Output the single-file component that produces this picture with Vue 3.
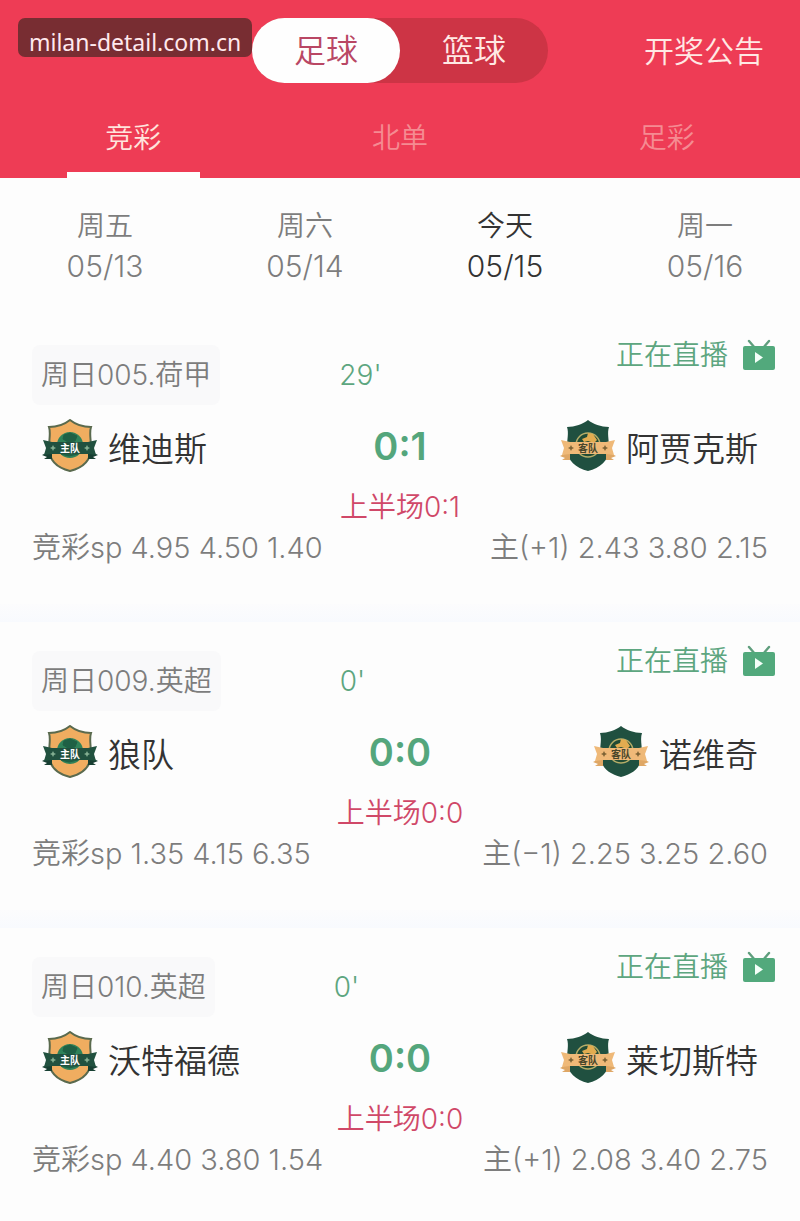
<template>
    <div class="page">
        <span class="site-label">milan-detail.com.cn</span>

        <header class="header">
            <div class="top-bar">
                <div class="switch">
                    <button v-for="sport in sports" :key="sport" type="button" class="switch-item"
                        :class="{ active: sport === activeSport }" @click="activeSport = sport">{{ sport }}</button>
                </div>
                <a href="#" class="notice">开奖公告</a>
            </div>
            <nav class="tabs">
                <button v-for="tab in tabs" :key="tab" type="button" class="tab"
                    :class="{ active: tab === activeTab }" @click="activeTab = tab">{{ tab }}</button>
            </nav>
        </header>

        <div class="days">
            <button v-for="day in days" :key="day.date" type="button" class="day"
                :class="{ active: day.date === activeDate }" @click="activeDate = day.date">
                <span>{{ day.name }}</span>
                <span class="date">{{ day.date }}</span>
            </button>
        </div>

        <main>
            <section v-for="match in matches" :key="match.league" class="match">
                <div class="match-top">
                    <span class="league">{{ match.league }}</span>
                    <span class="minute">{{ match.minute }}'</span>
                    <a href="#" class="live">
                        正在直播
                        <svg class="tv" viewBox="0 0 32 32" width="32" height="32" aria-hidden="true">
                            <path d="M6 2l6 7M26 2l-6 7" fill="none" stroke="#5f9e7d" stroke-width="2.4" stroke-linecap="round" />
                            <rect x="0" y="7" width="32" height="24" rx="2" fill="#52a97c" />
                            <path d="M12 13v11l8-5.500z" fill="#f4fff9" />
                        </svg>
                    </a>
                </div>

                <div class="teams">
                    <div class="team">
                        <svg class="badge" viewBox="0 0 56 54" width="56" height="54">
                            <path d="M28 1C23 5 15 8 7 8C9 14 7 20 7 29C7 42 16 49 28 52C40 49 49 42 49 29C49 20 47 14 49 8C41 8 33 5 28 1Z" fill="#f0ad60" stroke="#5a6a4e" stroke-width="2" />
                            <circle cx="28" cy="26" r="13" fill="#2f8259" />
                            <path d="M22 16l6-2 7 3-2 5-7 1-5-3zM19 35l8 2 9-2" fill="#1f6045" stroke="#1f6045" stroke-width="1" />
                            <path d="M0 36l10-5v9H2l3-2zM56 36l-10-5v9h8l-3-2z" fill="#173f32" />
                            <path d="M1 21l9 2h36l9-2-3 8 2 7-8-1H10l-8 1 2-7z" fill="#21513f" />
                            <path d="M11 26l1 2 2 1-2 1-1 2-1-2-2-1 2-1zM45 26l1 2 2 1-2 1-1 2-1-2-2-1 2-1z" fill="#83ae91" />
                            <text x="28" y="33" class="badge-text" fill="#fff">主队</text>
                        </svg>
                        <span class="name">{{ match.home }}</span>
                    </div>
                    <strong class="score">{{ match.score }}</strong>
                    <div class="team away">
                        <svg class="badge" viewBox="0 0 56 54" width="56" height="54">
                            <path d="M28 1C23 5 15 8 7 8C9 14 7 20 7 29C7 42 16 49 28 52C40 49 49 42 49 29C49 20 47 14 49 8C41 8 33 5 28 1Z" fill="#205040" />
                            <circle cx="28" cy="26" r="12" fill="#204b35" stroke="#b6ad68" stroke-width="1.500" />
                            <path d="M28 14l5 1 4 6-3 3-6-2-4 1-2-3 5-2z" fill="#e2ac50" />
                            <path d="M0 37l10-5v9H2l3-2zM56 37l-10-5v9h8l-3-2z" fill="#dfa765" />
                            <path d="M1 21l9 2h36l9-2-3 8 2 7-8-1H10l-8 1 2-7z" fill="#efb978" />
                            <path d="M11 26l1 2 2 1-2 1-1 2-1-2-2-1 2-1zM45 26l1 2 2 1-2 1-1 2-1-2-2-1 2-1z" fill="#7d6335" />
                            <text x="28" y="33" class="badge-text" fill="#49472b">客队</text>
                        </svg>
                        <span class="name">{{ match.away }}</span>
                    </div>
                </div>

                <p class="half">上半场{{ match.half }}</p>
                <div class="odds">
                    <span>竞彩sp {{ match.sp }}</span>
                    <span>{{ match.handicap }}</span>
                </div>
            </section>
        </main>
    </div>
</template>

<script setup>
    import { ref } from 'vue'

    const sports = ['足球', '篮球']
    const tabs = ['竞彩', '北单', '足彩']
    const days = [
        { name: '周五', date: '05/13' },
        { name: '周六', date: '05/14' },
        { name: '今天', date: '05/15' },
        { name: '周一', date: '05/16' },
    ]

    const activeSport = ref('足球')
    const activeTab = ref('竞彩')
    const activeDate = ref('05/15')

    const matches = [
        {
            league: '周日005.荷甲',
            minute: 29,
            home: '维迪斯',
            away: '阿贾克斯',
            score: '0:1',
            half: '0:1',
            sp: '4.95 4.50 1.40',
            handicap: '主(+1) 2.43 3.80 2.15',
        },
        {
            league: '周日009.英超',
            minute: 0,
            home: '狼队',
            away: '诺维奇',
            score: '0:0',
            half: '0:0',
            sp: '1.35 4.15 6.35',
            handicap: '主(−1) 2.25 3.25 2.60',
        },
        {
            league: '周日010.英超',
            minute: 0,
            home: '沃特福德',
            away: '莱切斯特',
            score: '0:0',
            half: '0:0',
            sp: '4.40 3.80 1.54',
            handicap: '主(+1) 2.08 3.40 2.75',
        },
    ]
</script>

<style>
    body {
        margin: 0;
        background: #fdfdfd;
    }
</style>

<style scoped>
    .page {
        position: relative;
        font-family: Inter, "Noto Sans CJK SC", sans-serif;
        font-size: 28px;
        font-weight: 350;
        line-height: 40px;
        color: #7d7d7d;
    }

    button {
        padding: 0;
        border: none;
        background: none;
        font: inherit;
        color: inherit;
        cursor: pointer;
    }

    a {
        color: inherit;
        text-decoration: none;
    }

    .site-label {
        position: absolute;
        top: 18px;
        left: 18px;
        padding: 9px 11px 0;
        border-radius: 7px;
        background: #782d32;
        font-family: "Noto Sans", sans-serif;
        font-size: 23px;
        font-weight: 400;
        line-height: 30px;
        color: #ffe9ee;
        z-index: 1;
    }

    .header {
        background: #ee3c55;
        color: #ffe9e4;
    }

    .top-bar {
        display: grid;
        grid-template-columns: 1fr 296px 1fr;
        align-items: center;
        padding: 18px 0 14px;
    }

    .switch {
        grid-column: 2;
        display: flex;
        border-radius: 33px;
        background: #cd3445;
        font-size: 32px;
    }

    .switch-item {
        flex: 1;
        height: 65px;
        border-radius: 33px;
    }

    .switch-item.active {
        background: #fefefe;
        color: #b94764;
    }

    .notice {
        justify-self: end;
        margin-right: 36px;
        font-size: 30px;
    }

    .tabs {
        display: flex;
    }

    .tab {
        display: flex;
        flex: 1;
        flex-direction: column;
        align-items: center;
        height: 81px;
        padding-top: 21px;
        color: #f58b92;
    }

    .tab.active {
        color: #ffe4dc;
    }

    .tab.active::after {
        content: '';
        width: 50%;
        height: 6px;
        margin-top: auto;
        background: #fefefe;
    }

    .days {
        display: flex;
        padding: 28px 0 30px;
    }

    .day {
        display: flex;
        flex: 1;
        flex-direction: column;
        align-items: center;
        padding-left: 10px;
    }

    .day.active {
        color: #333;
    }

    .date {
        font-size: 30px;
    }

    .match {
        padding: 19px 32px 36px;
    }

    .match:not(:last-child)::after {
        content: '';
        display: block;
        height: 18px;
        margin: 36px -32px -36px;
        background: linear-gradient(#fcfcfd, #f8fafe);
    }

    .match-top {
        display: flex;
        align-items: flex-end;
        height: 70px;
    }

    .league {
        padding: 10px 9px;
        border-radius: 8px;
        background: #f9f9fa;
    }

    .minute {
        margin-left: 119px;
        padding: 10px 0;
        color: #5da680;
    }

    .live {
        display: flex;
        align-items: center;
        align-self: flex-start;
        gap: 15px;
        margin-right: -7px;
        margin-left: auto;
        color: #5da680;
    }

    .teams {
        display: grid;
        grid-template-columns: 1fr auto 1fr;
        align-items: center;
        height: 60px;
        margin: 11px 10px;
        font-size: 33px;
        color: #333;
    }

    .team {
        display: flex;
        align-items: center;
        gap: 10px;
    }

    .team.away {
        justify-content: flex-end;
    }

    .name {
        padding-top: 6px;
    }

    .badge-text {
        font-size: 10px;
        font-weight: 700;
        text-anchor: middle;
    }

    .score {
        font-size: 38px;
        font-weight: 600;
        color: #54a67c;
    }

    .half {
        margin: 0;
        text-align: center;
        color: #d04868;
    }

    .odds {
        display: flex;
        justify-content: space-between;
        margin-top: 1px;
        font-size: 29px;
    }
</style>
